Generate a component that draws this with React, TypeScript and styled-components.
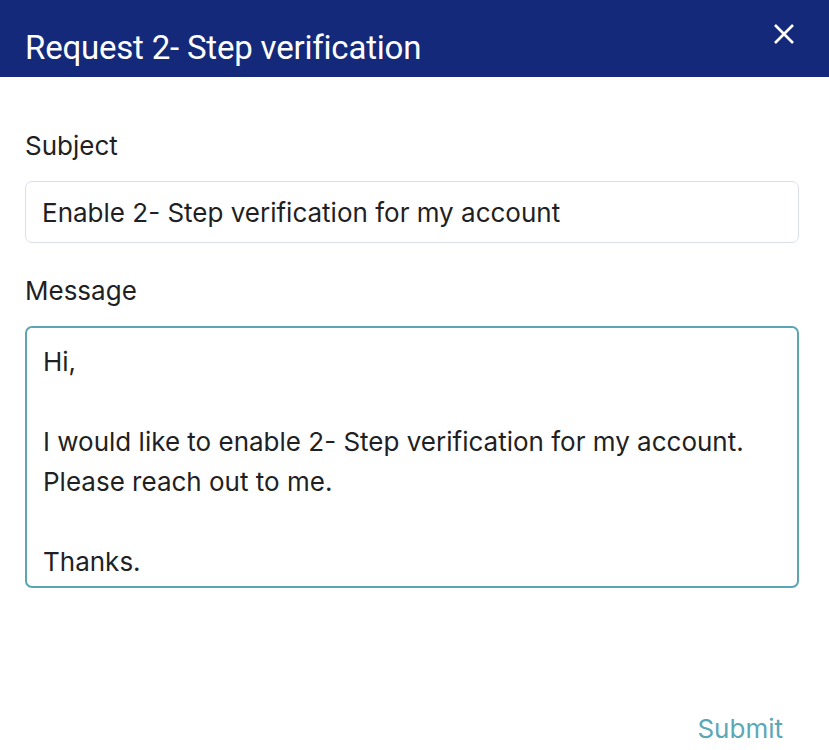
import React, { useState } from "react"
import styled, { createGlobalStyle } from "styled-components"

const GlobalStyle = createGlobalStyle`
  html, body {
    margin: 0;
    padding: 0;
    background: #ffffff;
  }
  body {
    font-family: Inter, "Open Sans", sans-serif;
  }
`

const Dialog = styled.div`
  display: flex;
  flex-direction: column;
  width: 829px;
  height: 750px;
  background: #ffffff;
  box-sizing: border-box;
`

const Header = styled.div`
  display: flex;
  align-items: flex-start;
  justify-content: space-between;
  height: 77px;
  padding: 0 32px 0 25px;
  background: #15297a;
  color: #ffffff;
  box-sizing: border-box;
`

const Title = styled.h1`
  margin: 0;
  padding-top: 28px;
  font-family: Roboto, "Liberation Sans", sans-serif;
  font-size: 33px;
  font-weight: 400;
  line-height: 40px;
  letter-spacing: -0.2px;
`

const CloseButton = styled.button`
  display: flex;
  align-items: center;
  justify-content: center;
  margin-top: 21px;
  padding: 0;
  width: 26px;
  height: 26px;
  border: 0;
  background: transparent;
  color: #ffffff;
  cursor: pointer;
`

const Body = styled.form`
  display: flex;
  flex: 1;
  flex-direction: column;
  padding: 53px 30px 0 25px;
`

const Label = styled.label`
  display: block;
  font-size: 26px;
  color: #1f1f24;
  line-height: 31px;
  margin-bottom: 20px;
`

const Field = styled.div<{ $gap: number }>`
  display: flex;
  flex-direction: column;
  margin-bottom: ${p => p.$gap}px;
`

const Input = styled.input`
  height: 62px;
  padding: 0 16px;
  border: 1.5px solid #dcdfea;
  border-radius: 7px;
  font-family: inherit;
  font-size: 26px;
  color: #1f1f24;
  box-sizing: border-box;
  outline: none;
`

const TextArea = styled.textarea`
  height: 262px;
  padding: 14px 16px;
  border: 2px solid #5ba5b4;
  border-radius: 7px;
  font-family: inherit;
  font-size: 26px;
  line-height: 40px;
  color: #1f1f24;
  resize: none;
  box-sizing: border-box;
  outline: none;
  overflow: hidden;
`

const Footer = styled.div`
  display: flex;
  justify-content: flex-end;
  margin-top: auto;
  padding: 0 16px 6px 0;
`

const SubmitButton = styled.button`
  border: 0;
  background: transparent;
  padding: 0;
  font-family: inherit;
  font-size: 26px;
  line-height: 31px;
  color: #5ca7b6;
  cursor: pointer;
`

const App: React.FC = () => {
  const [subject, setSubject] = useState(
    "Enable 2- Step verification for my account"
  )
  const [message, setMessage] = useState(
    "Hi,\n\nI would like to enable 2- Step verification for my account.\nPlease reach out to me.\n\nThanks."
  )

  return (
    <>
      <GlobalStyle />
      <Dialog>
        <Header>
          <Title>Request 2- Step verification</Title>
          <CloseButton type="button" aria-label="Close">
            <svg width="22" height="22" viewBox="0 0 22 22">
              <path
                d="M2 2 L20 20 M20 2 L2 20"
                stroke="#ffffff"
                strokeWidth="2.6"
                fill="none"
              />
            </svg>
          </CloseButton>
        </Header>
        <Body onSubmit={e => e.preventDefault()}>
          <Field $gap={32}>
            <Label htmlFor="subject">Subject</Label>
            <Input
              id="subject"
              value={subject}
              onChange={e => setSubject(e.target.value)}
            />
          </Field>
          <Field $gap={0}>
            <Label htmlFor="message">Message</Label>
            <TextArea
              id="message"
              value={message}
              onChange={e => setMessage(e.target.value)}
            />
          </Field>
          <Footer>
            <SubmitButton type="submit">Submit</SubmitButton>
          </Footer>
        </Body>
      </Dialog>
    </>
  )
}

export default App
